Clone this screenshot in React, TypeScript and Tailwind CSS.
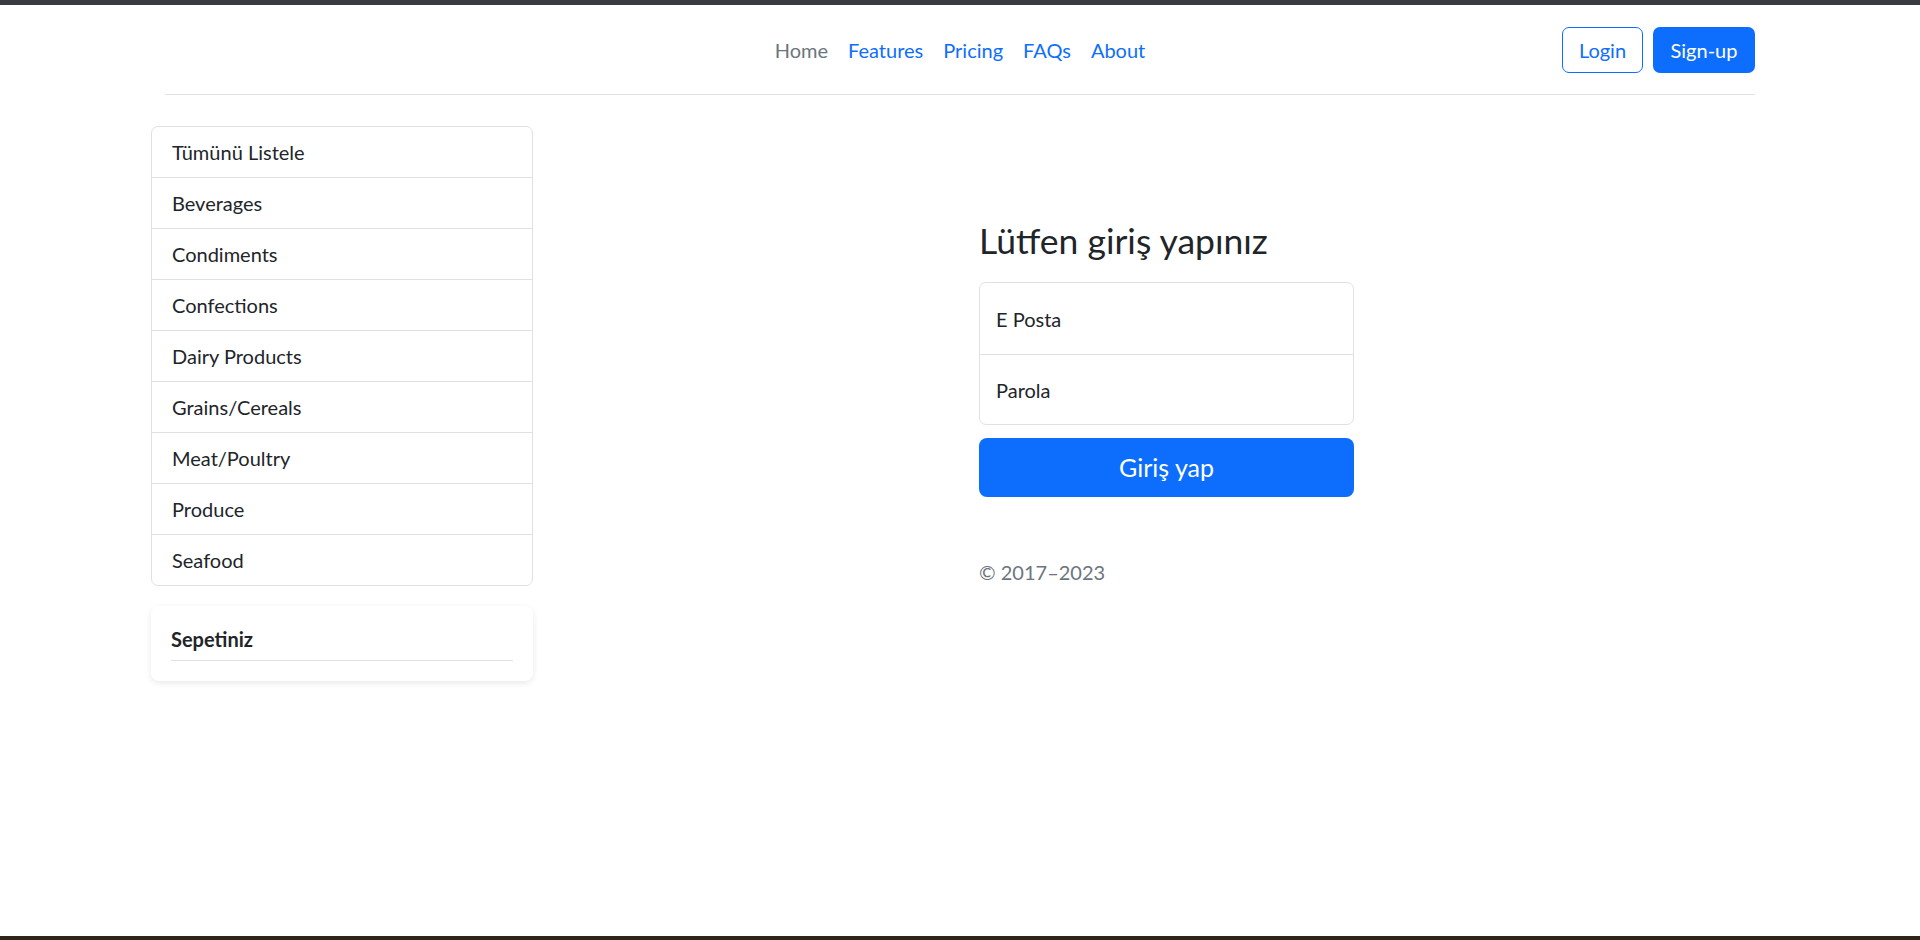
const categories = [
  "Tümünü Listele",
  "Beverages",
  "Condiments",
  "Confections",
  "Dairy Products",
  "Grains/Cereals",
  "Meat/Poultry",
  "Produce",
  "Seafood",
];

const navLinks = [
  { label: "Home", active: false },
  { label: "Features", active: true },
  { label: "Pricing", active: true },
  { label: "FAQs", active: true },
  { label: "About", active: true },
];

function Header() {
  return (
    <header className="mx-auto w-[1590px] grid grid-cols-[1fr_auto_1fr] items-center pt-[22px] pb-[21px] border-b border-[#dee2e6]">
      <div />
      <ul className="flex items-center">
        {navLinks.map((l) => (
          <li key={l.label}>
            <a
              href="#"
              className={
                "px-[10px] text-[20px] leading-[30px] " +
                (l.active ? "text-[#0d6efd]" : "text-[#6c757d]")
              }
            >
              {l.label}
            </a>
          </li>
        ))}
      </ul>
      <div className="flex justify-end gap-[10px]">
        <button className="w-[81px] h-[46px] rounded-[7px] border border-[#0d6efd] text-[#0d6efd] text-[20px]">
          Login
        </button>
        <button className="w-[102px] h-[46px] rounded-[7px] bg-[#0d6efd] text-white text-[20px]">
          Sign-up
        </button>
      </div>
    </header>
  );
}

function Sidebar() {
  return (
    <aside className="w-[382px] shrink-0">
      <ul className="border border-[#dee2e6] rounded-[7px]">
        {categories.map((c) => (
          <li
            key={c}
            className="h-[51px] first:h-[50px] flex items-center px-[20px] text-[20px] text-[#212529] border-t border-[#dee2e6] first:border-t-0"
          >
            {c}
          </li>
        ))}
      </ul>

      {/* Cart */}
      <div className="mt-[20px] rounded-[8px] bg-white shadow-[0_2px_6px_rgba(0,0,0,0.09)] px-[20px] pt-[18px] pb-[20px]">
        <h5 className="text-[20px] leading-[30px] font-bold text-[#212529]">Sepetiniz</h5>
        <hr className="mt-[6px] border-0 border-t border-[#dee2e6]" />
      </div>
    </aside>
  );
}

function LoginForm() {
  return (
    <main className="ml-[446px] w-[375px] pt-[94px]">
      <h1 className="text-[35.5px] leading-[42px] font-normal text-[#212529] mb-[20px]">
        Lütfen giriş yapınız
      </h1>

      <div className="border border-[#dee2e6] rounded-[7px]">
        <div className="h-[71px] flex items-center px-[16px] text-[20px] text-[#212529]">
          E Posta
        </div>
        <div className="h-[70px] flex items-center px-[16px] text-[20px] text-[#212529] border-t border-[#dee2e6]">
          Parola
        </div>
      </div>

      <button className="mt-[13px] w-full h-[59px] rounded-[8px] bg-[#0d6efd] text-white text-[25px]">
        Giriş yap
      </button>

      <p className="mt-[60px] text-[20px] leading-[30px] text-[#6c757d]">© 2017–2023</p>
    </main>
  );
}

export default function App() {
  return (
    <div
      className="h-[940px] flex flex-col bg-white"
      style={{ fontFamily: "Lato, 'Noto Sans', sans-serif" }}
    >
      <div className="h-[5px] bg-[#3a3b3f]" />
      <div className="flex-1">
        <Header />
        <div className="flex pl-[151px] mt-[31px]">
          <Sidebar />
          <LoginForm />
        </div>
      </div>
      <div className="h-[4px] bg-[#2e2519]" />
    </div>
  );
}
